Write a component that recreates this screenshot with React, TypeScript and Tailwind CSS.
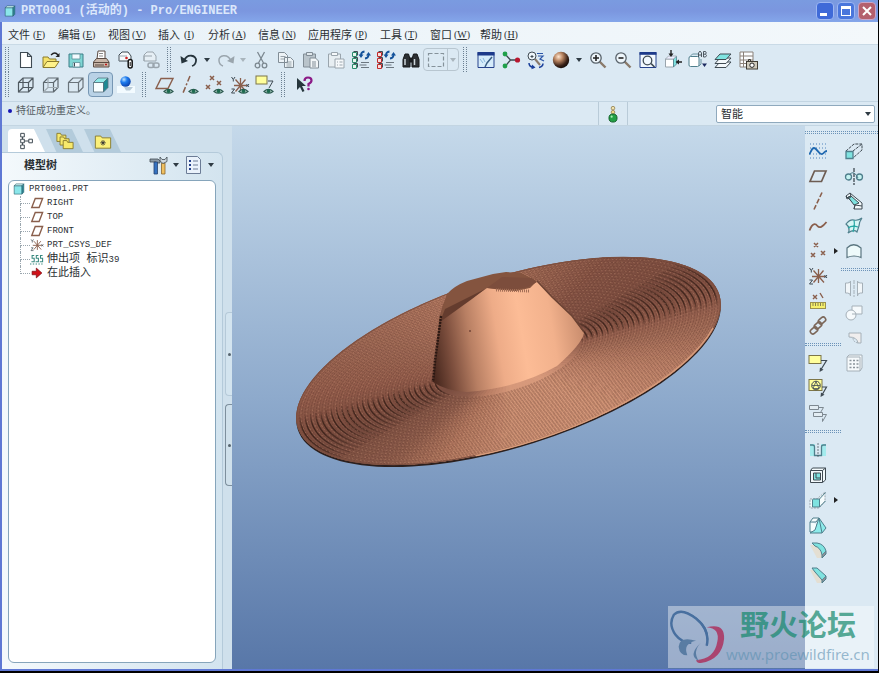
import type { ReactNode } from "react";

const B = "#8a5f4c";
const D = "#3f4a52";
const G = "#9aa5ad";
const C = "#7fe3e0";
const T = "#4f7f8c";

const eye = (
  <g>
    <path d="M9 16.500q4.500-4.500 9 0q-4.500 3.500-9 0z" fill="#dfeee8" stroke="#2c5a50" strokeWidth="1.200" />
    <circle cx="13.500" cy="16.200" r="1.900" fill="#1d6a4f" />
  </g>
);

const cube = (stroke: string, hidden: boolean, hiddenColor = stroke) => (
  <g fill="none" stroke={stroke} strokeWidth="1.200">
    <path d="M2.500 7.500h10v9.500h-10zM2.500 7.500l4.500-4.500h10v9.500l-4.500 4.500M12.500 7.500l4.500-4.500" />
    {hidden && <path d="M7 3v9.500h10M7 12.500l-4.500 4.500" stroke={hiddenColor} />}
  </g>
);

const magnifier = (inner: ReactNode) => (
  <g fill="none">
    <path d="M11.500 11.500l6 6" stroke="#8a7a6a" strokeWidth="2.400" />
    <circle cx="8" cy="8" r="5.200" fill="#eef6fb" stroke="#59636b" strokeWidth="1.300" />
    {inner}
  </g>
);

const csys = (
  <g stroke={B} strokeWidth="1.300" fill="none">
    <path d="M10.500 3v14M4 10.500h13M5.500 4.500l10.500 12M15.500 4.500l-10 12" />
    <path d="M1.500 2l1.800 2.500L5 2M3.300 4.500v2M1.500 14h3l-3 4h3.500M16.500 9l2.500 3M19 9l-2.500 3" stroke={D} strokeWidth="1" />
  </g>
);

const note = (
  <g>
    <rect x="1" y="2.500" width="12" height="8" fill="#ffff9c" stroke="#7d7648" />
    <path d="M13 7.500h5.500l-5.500 9" fill="none" stroke={D} strokeWidth="1.200" />
    <path d="M11.500 19l.500-4.500 3.500 2.200z" fill={D} />
  </g>
);

const model = (dot: string, box: string) => (
  <g>
    <g fill={box} stroke={dot} strokeWidth="1">
      <path d="M1.500 2.500h4v4H1.500zM1.500 8.500h4v4H1.500zM1.500 14.500h4v4H1.500z" />
    </g>
    <path d="M2.500 1.500h4v4M2.500 7.500h4v4M2.500 13.500h4v4" fill="none" stroke={D} strokeWidth="1" />
    <path d="M10 5q0-3 3.500-3.500M17.500 5q0 3-3.500 3.500" fill="none" stroke="#14529a" strokeWidth="1.800" />
    <path d="M7.500 4.500h5L10 8zM15 5.500h5L17.500 2z" fill="#14529a" />
    <path d="M10 12.500h8M8.500 15h7M10 17.500h8" stroke="#6c7780" strokeWidth="1.100" />
  </g>
);

const ICONS: Record<string, ReactNode> = {
  new: <path d="M4.500 2.500h7l4 4v11h-11zM11.500 2.500v4h4" fill="#fff" stroke={D} strokeWidth="1.100" />,
  open: (
    <g>
      <path d="M2 17V7h5l1.500 2H15v3" fill="#f5e26b" stroke="#8a7a2c" />
      <path d="M2 17.500l4-6h12l-4 6z" fill="#fff28a" stroke="#8a7a2c" />
      <path d="M10 5q4-4 7 0" fill="none" stroke="#222" strokeWidth="1.300" />
      <path d="M18.500 3v4h-4z" fill="#222" />
    </g>
  ),
  save: (
    <g>
      <path d="M3 4h14v13H3z" fill="#7fd6d4" stroke="#3d7f88" />
      <path d="M6 4h8v5H6zM7 12.500h7V17H7z" fill="#f4fbff" stroke="#5a8f98" strokeWidth=".800" />
      <path d="M8.500 13v3.500" stroke={D} />
    </g>
  ),
  print: (
    <g stroke="#5b4b42" strokeWidth="1">
      <path d="M6 9l1-8h7v8z" fill="#fff" />
      <path d="M8 3.500h4M8 6h4" stroke="#888" />
      <path d="M2.500 12l3-3.500h10l2.500 3.500v5h-15.500z" fill="#c9b6a8" />
      <path d="M2.500 12.500H18M4 15h9" fill="none" />
      <path d="M14 14.500h2" stroke="#c01818" strokeWidth="1.500" />
    </g>
  ),
  attach: (
    <g fill="none">
      <path d="M3 11V5l3-3h6l3 4v5z" fill="#f6f9fb" stroke={D} />
      <path d="M3 11V6h8" stroke={G} />
      <circle cx="10.500" cy="8" r="1.300" fill="#d02020" />
      <rect x="12.200" y="9.500" width="4" height="8.500" rx="2" fill="#fff" stroke="#111" strokeWidth="1.500" />
      <path d="M14.200 12v4" stroke="#111" />
    </g>
  ),
  link: (
    <g fill="none" stroke={G}>
      <path d="M3 11V5l3-3h6l3 4v5zM3 11V6h8" fill="#e6eff5" />
      <rect x="7" y="13" width="6" height="4.500" rx="2" strokeWidth="1.500" />
      <rect x="12" y="13" width="6" height="4.500" rx="2" strokeWidth="1.500" />
    </g>
  ),
  undo: (
    <g>
      <path d="M5 11C8 3 18 5 17 11q-.500 4-4 5" fill="none" stroke="#26343c" strokeWidth="1.800" />
      <path d="M1.500 6l1 7.500 6.500-2.500z" fill="#26343c" />
    </g>
  ),
  redo: (
    <g>
      <path d="M15 11C12 3 2 5 3 11q.500 4 4 5" fill="none" stroke={G} strokeWidth="1.500" />
      <path d="M18.500 6l-1 7.500-6.500-2.500z" fill={G} />
    </g>
  ),
  cut: (
    <g fill="none" stroke="#7c8890" strokeWidth="1.300">
      <path d="M6.500 2l6 11M13.500 2l-6 11" />
      <circle cx="6.500" cy="15.500" r="2.300" />
      <circle cx="13.500" cy="15.500" r="2.300" />
    </g>
  ),
  copy: (
    <g fill="#edf3f7" stroke="#818d96">
      <path d="M2.500 2.500h6l3 3v7h-9zM8.500 7.500h6l3 3v7h-9z" />
      <path d="M4.500 6.500h5M4.500 9h4M10.500 12h5M10.500 14h5M10.500 16h5" strokeWidth=".800" />
    </g>
  ),
  paste: (
    <g stroke="#818d96">
      <path d="M2.500 4h12v13h-12z" fill="#b9c4cb" />
      <path d="M5.500 5.500v-3h6v3z" fill="#dfe7ec" />
      <path d="M9 8h5.500l3 3v7H9z" fill="#f2f6f8" />
      <path d="M11 12h4M11 14h4M11 16h4" />
    </g>
  ),
  special: (
    <g stroke={G}>
      <path d="M2.500 4h12v13h-12z" fill="#e7eef2" />
      <path d="M5.500 5.500v-3h6v3z" fill="#f6f9fb" />
      <path d="M9 9h9v9H9z" fill="#f6f9fb" />
      <path d="M11 12h1M13.500 12h3M11 15h1M13.500 15h3" />
    </g>
  ),
  regen: model("#2c8c6c", "#e9f6ef"),
  regen2: model("#c22a2a", "#f8dede"),
  find: (
    <g fill="#2c3033" stroke="#16181a">
      <path d="M4 4h3.500l1.500 5v8H2V9.500zM12.500 4H16l2 5.500V17h-7V9zM9 8h2v4H9z" />
      <path d="M4 9v6M13.500 9v6" stroke="#cdd5da" strokeWidth="1.500" />
    </g>
  ),
  select: <path d="M2.500 3.500h15v13h-15z" fill="none" stroke="#85929a" strokeWidth="1.200" strokeDasharray="4 2" />,
  repaint: (
    <g>
      <path d="M2 2.500h16v15H2z" fill="#d6ecfb" stroke="#26428c" />
      <path d="M1.500 2h17v3.500h-17z" fill="#1d3a8a" />
      <path d="M4 9l3 4M7 8l2 4" stroke="#8ab8dc" />
      <path d="M16 7l-5 6-2 4" fill="none" stroke="#3a5f84" strokeWidth="1.500" />
    </g>
  ),
  spin: (
    <g>
      <path d="M4.500 4.500l5 5.500-5 6M9.500 10H17" fill="none" stroke="#3e4a50" strokeWidth="1.300" />
      <circle cx="4" cy="4" r="2.400" fill="#20a04a" />
      <circle cx="4" cy="16" r="2.400" fill="#20a04a" />
      <circle cx="16.500" cy="10" r="2.600" fill="#b81830" />
    </g>
  ),
  orient: (
    <g fill="none">
      <path d="M9 9l5 6" stroke="#8a7a6a" strokeWidth="2" />
      <circle cx="6" cy="6" r="4" fill="#eef6fb" stroke={D} />
      <path d="M4.500 6.500h3M6 5v3" stroke={D} />
      <path d="M11 3.500h6M12 6h5l-3 3 4 2" stroke="#2a55a8" strokeWidth="1.200" />
      <path d="M3 13q0 4 5 4.500M13 17.500q4-1 4-4" stroke="#1a3f9a" strokeWidth="1.500" />
      <path d="M6 14.500l3.500 3-4 1.800z" fill="#1a3f9a" />
    </g>
  ),
  sphere: <circle cx="10" cy="10" r="8.200" fill="url(#ball)" />,
  zoomin: magnifier(<path d="M5 8h6M8 5v6" stroke="#222" strokeWidth="1.600" />),
  zoomout: magnifier(<path d="M5.500 8h5" stroke="#222" strokeWidth="1.600" />),
  refit: (
    <g fill="none">
      <path d="M2 2.500h16v15H2z" fill="#f2f9ff" stroke="#26428c" />
      <path d="M1.500 2h17v2.800h-17z" fill="#1d3a8a" />
      <circle cx="9.500" cy="10.500" r="4.300" stroke={D} strokeWidth="1.300" />
      <path d="M13 13.500l3.500 3.500" stroke={D} strokeWidth="1.700" />
    </g>
  ),
  reorient: (
    <g>
      <path d="M2.500 9h8v8h-8z" fill="#fff" stroke={G} />
      <path d="M10.500 9l3-3v8l-3 3z" fill={C} stroke={T} strokeWidth=".800" />
      <path d="M2.500 9l3-3h8l-3 3z" fill="#eef" stroke={G} strokeWidth=".800" />
      <path d="M8 0v5M19 12h-4" stroke="#222" strokeWidth="1.400" />
      <path d="M5.500 3.500h5L8 7zM16 9.500v5L12.500 12z" fill="#222" />
    </g>
  ),
  views: (
    <g>
      <rect x="1" y="6.500" width="10" height="10" rx="1.500" fill="#fff" stroke={T} />
      <path d="M2 6.500l2.500-2.500h6M11 16l2-2V9" fill="none" stroke={T} strokeWidth=".800" />
      <path d="M10.500 7V3l1.500-2 1.500 2v4M10.500 5h3M15.500 1.500V7h2q2-1.500 0-2.800q1.500-1.200 0-2.700zM15.500 4.200h2" fill="none" stroke={D} strokeWidth=".900" />
      <path d="M14 13.500h5L16.500 17z" fill="#1c2a60" />
    </g>
  ),
  layers: (
    <g stroke={D} strokeWidth="1" strokeLinejoin="round">
      <path d="M2 17.500h11l5-5.500H7z" fill="#f3f8fb" />
      <path d="M2 13.500h11L18 8H7z" fill="#f3f8fb" />
      <path d="M2 9.500h11L18 4H7z" fill={C} />
    </g>
  ),
  viewmgr: (
    <g>
      <path d="M2 2h13v15H2zM5.500 2v15M2 6h13M2 10h13M2 13.500h8" fill="#fbfdff" stroke="#8a8078" />
      <rect x="8.500" y="11.500" width="11" height="7.500" fill="#cfcabc" stroke="#403c34" />
      <circle cx="14" cy="15.200" r="2.200" fill="#fff" stroke="#222" />
      <path d="M10.500 11v-1.500h2V11" fill="none" stroke="#403c34" />
    </g>
  ),
  wire: cube("#4f5960", true),
  hiddenline: cube("#5f6970", true, "#a2adb4"),
  nohidden: cube("#6a747b", false),
  shaded: (
    <g strokeWidth=".800" stroke="#56707c">
      <path d="M2.500 7.500h10v9.500h-10z" fill="#f8feff" />
      <path d="M2.500 7.500l4.500-4.500h10l-4.500 4.500z" fill="#8fe9e8" />
      <path d="M12.500 7.500l4.500-4.500v9.500l-4.500 4.500z" fill="#1d8a94" />
    </g>
  ),
  enhanced: (
    <g>
      <path d="M1 11h18v7H1z" fill="#f3fbff" />
      <path d="M8 12h9l-3 3.500h-4z" fill="#b9cbd8" />
      <circle cx="9.500" cy="6.500" r="5.200" fill="url(#blueball)" />
    </g>
  ),
  planes: (
    <g>
      <path d="M6 3.500h12l-5 10H1z" fill="none" stroke={B} strokeWidth="1.400" />
      {eye}
    </g>
  ),
  axes: (
    <g>
      <path d="M10 1L3 18" stroke={B} strokeWidth="1.500" strokeDasharray="6 2 2 2" />
      {eye}
    </g>
  ),
  points: (
    <g>
      <path d="M5 1l4 4m0-4L5 5M1 10l4 4m0-4l-4 4M12 6l4 4m0-4l-4 4" stroke={B} strokeWidth="1.500" />
      {eye}
    </g>
  ),
  csysshow: (
    <g>
      {csys}
      {eye}
    </g>
  ),
  notes: (
    <g>
      <rect x="1" y="1" width="11" height="8" fill="#ffff9c" stroke="#7d7648" />
      <path d="M13 6h5l-4 7" fill="none" stroke={D} />
      {eye}
    </g>
  ),
  help: (
    <g>
      <path d="M3 3v12l3-3 2.500 5 2-1-2.500-5h4z" fill="#26363c" />
      <path d="M10.500 6q0-3.500 3.500-3.500t3.500 3q0 2-3 3.500v2.500" fill="none" stroke="#8b1a86" strokeWidth="2.200" />
      <circle cx="14.500" cy="14" r="1.300" fill="#8b1a86" />
    </g>
  ),
  sketch: (
    <g fill="none">
      <path d="M2 3h16M2 7h16M2 13h16M2 17h16" stroke="#4f83bd" strokeDasharray="1 2" />
      <path d="M1 13c2 0 2-6 5-6s5 7 8 6 2-3 5-3" stroke="#1f68b0" strokeWidth="1.800" />
    </g>
  ),
  plane: <path d="M6.500 5H18l-4.500 10.500H2z" fill="none" stroke="#6d5c52" strokeWidth="1.700" />,
  treeplane: <path d="M7.500 3.500H18l-5 13H2.500z" fill="none" stroke={B} strokeWidth="2" />,
  axis: <path d="M14 1.500L6 18.500" stroke={B} strokeWidth="1.600" strokeDasharray="5 2" />,
  curve: <path d="M1.500 14.500c3-8 6-7 8-4.500s5 1 9-4" fill="none" stroke={B} strokeWidth="1.800" />,
  point: <path d="M6 2l4 4m0-4L6 6M3 12l4 4m0-4l-4 4M13 10l4 4m0-4l-4 4" stroke={B} strokeWidth="1.500" />,
  csys,
  analysis: (
    <g>
      <path d="M5 4l4 4m0-4L5 8M12 2l3 5" stroke={B} strokeWidth="1.400" />
      <rect x="2.500" y="11.500" width="15" height="6" fill="#f5ef6a" stroke="#9c924c" />
      <path d="M5 12v3M7.500 12v3M10 12v3M12.500 12v3M15 12v3" stroke="#7d7648" strokeWidth=".900" />
    </g>
  ),
  chain: (
    <g fill="none" stroke="#7b6658" strokeWidth="1.600">
      <rect x="10" y="2" width="8" height="5" rx="2.500" transform="rotate(-40 14 4.500)" />
      <rect x="6" y="7" width="8" height="5" rx="2.500" transform="rotate(-40 10 9.500)" />
      <rect x="2" y="12" width="8" height="5" rx="2.500" transform="rotate(-40 6 14.500)" />
    </g>
  ),
  note,
  symbol: (
    <g>
      <rect x="1" y="1.500" width="13" height="11" fill="#ffff9c" stroke="#7d7648" />
      <circle cx="8" cy="7.500" r="4.300" fill="none" stroke={D} />
      <path d="M8 3.500l3 7H5zM4 7.500h8" fill="none" stroke={D} strokeWidth=".800" />
      <path d="M14 9h4.500l-4.500 8" fill="none" stroke={D} strokeWidth="1.200" />
      <path d="M12.500 19l.500-4.500 3.500 2.200z" fill={D} />
    </g>
  ),
  balloon: (
    <g fill="#e3edf3" stroke="#7e8991">
      <path d="M1.500 2.500h9v4h-9zM5.500 9.500h9v4h-9z" />
      <path d="M10.500 4.500h5l-3 5M14.500 11.500h4l-4 7M14.500 18.500v-3" fill="none" />
    </g>
  ),
  hole: (
    <g fill="none">
      <path d="M2 4h5v12H2zM13 4h5v12h-5z" fill="#8debea" stroke="none" opacity=".7" />
      <path d="M2 5h2.500q2 0 2 2v8.500h7V7q0-2 2-2H18" stroke={T} strokeWidth="1.300" />
      <path d="M10 3v14" stroke={D} strokeDasharray="2 1" strokeWidth=".700" />
    </g>
  ),
  shell: (
    <g fill="none" stroke={D}>
      <path d="M2.500 5.500h12v12h-12zM2.500 5.500l2-2.500h13v12l-3 2.500M14.500 5.500l3-2.500" fill="#f3fafc" />
      <path d="M5.500 8h7v7h-7z" fill={C} />
      <path d="M8 8v5h4.500" />
    </g>
  ),
  rib: (
    <g fill="none">
      <path d="M2 9h7l8-7v9l-6 7H2z" fill="#f5fcfd" stroke={G} strokeDasharray="2 1" />
      <path d="M4.500 10q0-1 1-1h6v8h-7z" fill={C} stroke={T} />
      <path d="M11.500 9l6-6.500M11.500 17l6-6" stroke={T} />
    </g>
  ),
  draft: (
    <g stroke={T}>
      <path d="M2 7h6l3-4H5zM2 7v10h7V9" fill="#f5fcfd" />
      <path d="M7 15l4-12 7 10-4 5H2z" fill="#8debea" />
      <path d="M11 3l3 15" fill="none" />
    </g>
  ),
  round: (
    <g>
      <path d="M2 5h7l5 7v6H9z" fill="#e6dccb" opacity=".8" />
      <path d="M4 3h5q7 1 9 8l-4 4q-1-7-7-9z" fill={C} stroke={T} />
      <path d="M14 15v3l4-4v-3" fill="#8a9298" stroke={T} />
    </g>
  ),
  chamfer: (
    <g>
      <path d="M2 5h7l5 7v6H9z" fill="#e6dccb" opacity=".8" />
      <path d="M4 3h5l9 8-4 4-7-8z" fill={C} stroke={T} />
      <path d="M14 15v3l4-4v-3" fill="#8a9298" stroke={T} />
    </g>
  ),
  extrude: (
    <g fill="none" stroke={D}>
      <path d="M2 10l8-7h8v6l-9 8M9 10l9-7" strokeDasharray="3 1" />
      <path d="M2 10.500h7v7H2z" fill={C} stroke={T} strokeWidth="1.300" />
    </g>
  ),
  revolve: (
    <g fill="none">
      <path d="M10 2v17" stroke={D} strokeDasharray="4 1" strokeWidth="1.300" />
      <circle cx="4.500" cy="11" r="3" fill="#c5f3f1" stroke={T} strokeWidth="1.300" />
      <circle cx="15.500" cy="11" r="3" fill="#c5f3f1" stroke={T} strokeWidth="1.300" />
      <path d="M6 8q4-4 8 4" stroke={T} />
    </g>
  ),
  sweep: (
    <g stroke={D}>
      <path d="M2 5l4-3 12 10v6h-8l1-4z" fill="#f3fafc" />
      <path d="M4 6l3-1 8 7-5 2z" fill={C} />
      <path d="M2 5l1 3 4-2-1-4M10 18l1-4 7 1" fill="none" />
    </g>
  ),
  boundary: (
    <g fill="#d6f6f5" stroke={T} strokeWidth="1.200">
      <path d="M2 8q4-5 8-4t8-2q-3 4-3 8l-2 6q-3-3-9 1 3-5-2-9z" />
      <path d="M4 12q4-3 10-1M10 4q1 5-1 12" fill="none" stroke="#26a8a4" />
    </g>
  ),
  style: <path d="M3 16.500V7q6.500-6.500 14 0v9.500q-7-3-14 0z" fill="#eefafb" stroke="#5b7680" strokeWidth="1.200" />,
  mirror: (
    <g fill="#f1f6f9" stroke="#a5b0b8">
      <path d="M10 2v17" strokeDasharray="4 1" />
      <path d="M1.500 5h2q3 0 3-2v15q0-3-3-3h-2zM18.500 5h-2q-3 0-3-2v15q0-3 3-3h2z" />
    </g>
  ),
  merge: (
    <g fill="#f6fafc" stroke="#a5b0b8">
      <path d="M8 3h10v8H8z" />
      <circle cx="7" cy="12" r="5" />
      <path d="M8 11h4" />
    </g>
  ),
  trim: (
    <g fill="#f0eeee" stroke="#a5b0b8">
      <path d="M5 5h12v10h-3q-1-6-9-6z" />
      <path d="M14 15q-5-1-5-5" strokeDasharray="2 1" fill="none" />
    </g>
  ),
  pattern: (
    <g fill="#f6fafc" stroke="#a5b0b8">
      <path d="M3 4l2-2h13v13l-2 3H3z" />
      <path d="M3 4h13v14" fill="none" />
      <path d="M5.500 7.500h9M5.500 11h9M5.500 14.500h9" stroke="#8a949b" strokeWidth="1.500" strokeDasharray="2 1.500" />
    </g>
  ),
  light: (
    <g stroke="#4a5a3c">
      <circle cx="10" cy="3.500" r="2" fill="#f2e3b0" stroke="#9a8a5a" />
      <circle cx="10" cy="8" r="2" fill="#f2d98a" stroke="#9a8a5a" />
      <circle cx="10" cy="14.500" r="4.500" fill="#22a045" stroke="#0c5a22" />
      <circle cx="8.500" cy="13" r="1.200" fill="#a8efb4" stroke="none" />
    </g>
  ),
  tree: (
    <g fill="#fff" stroke={D} strokeWidth="1.100">
      <path d="M5 5v11M5 10h8" />
      <path d="M3 1.500h4v4H3zM3 8h4v4H3zM3 14.500h4v4H3zM12 8h4v4h-4z" />
    </g>
  ),
  folders: (
    <g fill="#f7e96c" stroke="#86782c">
      <path d="M1 1.500h4l1 2h5v7H1z" />
      <path d="M4.500 5.500h4l1 2h5v7h-10z" />
      <path d="M8 9.500h4l1 2h6v7H8z" />
    </g>
  ),
  favorite: (
    <g>
      <path d="M1.500 4.500h6l1.500 2h9.500v11.500h-17z" fill="#fbf07a" stroke="#86782c" />
      <path d="M10 9v6M7 12h6M8 10l4 4M12 10l-4 4" stroke="#333" />
    </g>
  ),
  tools: (
    <g>
      <path d="M1 4h8l2 2v2H8L7 7H1z" fill="#8c9aa6" stroke="#3f4a52" strokeWidth=".800" />
      <path d="M5 7h3.500v12H5z" fill="#3572c0" stroke="#27436e" strokeWidth=".800" />
      <path d="M12.500 8H16v11h-3.500z" fill="#f0c060" stroke="#8a642c" strokeWidth=".800" />
      <path d="M11 2v4l3 2.500 4-2V2l-2 2.500h-3z" fill="#cfd8de" stroke="#3f4a52" strokeWidth=".800" />
    </g>
  ),
  settings: (
    <g>
      <path d="M2.500 1.500h11l3 3v14h-14z" fill="#eaf2fb" stroke="#6c7c96" />
      <path d="M5 6h2M5 10h2M5 14h2" stroke="#26428c" strokeWidth="2" />
      <path d="M9 6h5M9 10h5M9 14h5" stroke="#6c7c96" />
    </g>
  ),
  part: (
    <g stroke="#26606c">
      <path d="M2 4.500h13v14H2z" fill="#8be6ea" />
      <path d="M2 4.500l3-3h13l-3 3z" fill="#d6fbfb" />
      <path d="M15 4.500l3-3v14l-3 3z" fill="#2e8b97" />
    </g>
  ),
  feature: (
    <g fill="none" stroke="#3a8a80" strokeWidth="1.500">
      <path d="M6 5H3v4h3v5H2M12 5H9v4h3v5H8M18 5h-3v4h3v5h-4" />
      <path d="M0 17h20" strokeDasharray="2 2" />
    </g>
  ),
  insert: <path d="M3 7.500h6V3l8 7-8 7v-4.500H3z" fill="#d01018" stroke="#7a0a10" />,
};

function Icon({ name, className = "h-5 w-5" }: { name: string; className?: string }) {
  return (
    <svg viewBox="0 0 20 20" className={`${className} shrink-0`} aria-hidden="true">
      {ICONS[name]}
    </svg>
  );
}

function Tool({ name, label, active = false }: { name: string; label: string; active?: boolean }) {
  return (
    <button
      aria-label={label}
      className={
        active
          ? "flex h-[25px] w-[25px] shrink-0 items-center justify-center rounded-sm border border-[#7797b4] bg-[#b9d2e6]"
          : "flex h-[25px] w-[25px] shrink-0 items-center justify-center"
      }
    >
      <Icon name={name} />
    </button>
  );
}

function Caret({ muted = false, className = "w-3" }: { muted?: boolean; className?: string }) {
  return (
    <button aria-label="更多" className={`flex h-[25px] shrink-0 items-center justify-center ${className}`}>
      <svg viewBox="0 0 6 4" className="h-1 w-1.5" aria-hidden="true">
        <path d="M0 0h6L3 4z" fill={muted ? "#a9b5bd" : "#2f3b44"} />
      </svg>
    </button>
  );
}

function Grip() {
  return (
    <div className="flex h-[25px] w-1 shrink-0 justify-between">
      <div className="border-l border-dotted border-[#6c8092]" />
      <div className="border-l border-dotted border-[#6c8092]" />
    </div>
  );
}

function HGrip() {
  return (
    <div className="flex h-3 flex-col justify-center gap-px">
      <div className="border-t border-dotted border-[#6c93b8]" />
      <div className="border-t border-dotted border-[#6c93b8]" />
    </div>
  );
}

const MENUS: [string, string][] = [
  ["文件", "F"], ["编辑", "E"], ["视图", "V"], ["插入", "I"], ["分析", "A"],
  ["信息", "N"], ["应用程序", "P"], ["工具", "T"], ["窗口", "W"], ["帮助", "H"],
];

function ToolList({ items }: { items: [string, string][] }) {
  return (
    <>
      {items.map(([n, l]) => (
        <Tool key={n} name={n} label={l} />
      ))}
    </>
  );
}

const TREE: { icon: string; latin?: string; cjk?: string; num?: string }[] = [
  { icon: "treeplane", latin: "RIGHT" },
  { icon: "treeplane", latin: "TOP" },
  { icon: "treeplane", latin: "FRONT" },
  { icon: "csys", latin: "PRT_CSYS_DEF" },
  { icon: "feature", cjk: "伸出项 标识", num: "39" },
  { icon: "insert", cjk: "在此插入" },
];

// Brim shading by angle (degrees, clockwise from the long axis of the ellipse).
const STOPS: [number, number[]][] = [
  [0, [138, 87, 71]],
  [20, [160, 106, 86]],
  [45, [194, 134, 108]],
  [70, [216, 154, 124]],
  [95, [214, 152, 122]],
  [115, [184, 124, 99]],
  [132, [142, 93, 76]],
  [160, [120, 76, 63]],
  [180, [130, 81, 66]],
  [200, [146, 92, 75]],
  [230, [160, 106, 86]],
  [262, [186, 126, 102]],
  [285, [158, 103, 83]],
  [305, [134, 84, 69]],
  [340, [122, 76, 63]],
  [360, [138, 87, 71]],
];

function shade(deg: number) {
  const i = STOPS.findIndex(([a]) => a > deg);
  const [a0, c0] = STOPS[i - 1];
  const [a1, c1] = STOPS[i];
  const t = (deg - a0) / (a1 - a0);
  return `rgb(${c0.map((v, k) => Math.round(v + (c1[k] - v) * t)).join(",")})`;
}

const SECTORS = Array.from({ length: 120 }, (_, i) => {
  const p = (d: number) => `${221 * Math.cos((d * Math.PI) / 180)} ${84 * Math.sin((d * Math.PI) / 180)}`;
  return { d: `M0 0L${p(i * 3)}L${p(i * 3 + 3.6)}z`, fill: shade(i * 3 + 1.5) };
});

// Arcs of the dark groove bands at both ends of the brim, strongest mid-band.
const GROOVES = [8, 14, 20, 26].flatMap((half) =>
  Array.from({ length: 27 }, (_, i) => {
    const rx = 217 - i * 5.4;
    const ry = 82.500 - i * 2.050;
    const a = ((176 - half) * Math.PI) / 180;
    const b = ((176 + half * 0.4) * Math.PI) / 180;
    const p = (t: number, s: number) => `${s * rx * Math.cos(t)} ${s * ry * Math.sin(t)}`;
    return `M${p(a, 1)}A${rx} ${ry} 0 0 1 ${p(b, 1)}M${p(a, -1)}A${rx} ${ry} 0 0 1 ${p(b, -1)}`;
  }),
);

function Hat() {
  return (
    <svg viewBox="0 0 573 543" className="h-full w-full" role="img" aria-label="PRT0001">
      <defs>
        <linearGradient id="crown" gradientUnits="userSpaceOnUse" x1="200" y1="230" x2="352" y2="205">
          <stop offset="0" stopColor="#49291f" />
          <stop offset=".12" stopColor="#7c4e3d" />
          <stop offset=".26" stopColor="#b87f63" />
          <stop offset=".44" stopColor="#eeac88" />
          <stop offset=".6" stopColor="#fcbc96" />
          <stop offset=".8" stopColor="#f2b18c" />
          <stop offset="1" stopColor="#c88c6d" />
        </linearGradient>
      </defs>
      <g transform="translate(276.5 237) rotate(-17.500)">
        <ellipse rx="221" ry="84" fill="#2c201e" />
      </g>
      <g transform="translate(276.500 235) rotate(-17.500)">
        <ellipse rx="221" ry="84" fill="#8a5947" />
        {SECTORS.map((s) => (
          <path key={s.d} d={s.d} fill={s.fill} />
        ))}
        <g fill="none" stroke="#5a3327" strokeWidth="1" strokeDasharray="2 1">
          {Array.from({ length: 48 }, (_, i) => (
            <ellipse key={i} rx={218 - i * 3} ry={83 - i * 1.14} opacity=".35" />
          ))}
        </g>
        <g fill="none" stroke="#21110d" strokeWidth="1.200">
          {GROOVES.map((d, i) => (
            <path key={i} d={d} opacity=".22" />
          ))}
        </g>
        <g fill="none" stroke="#eab090" strokeWidth=".700" strokeDasharray="1.500 2.500">
          {Array.from({ length: 24 }, (_, i) => (
            <ellipse key={i} rx={216 - i * 6} ry={82 - i * 2.300} opacity=".35" />
          ))}
        </g>
        <ellipse rx="220.500" ry="83.500" fill="none" stroke="#7a4e3f" />
        <path d="M-60 80.500A221 84 0 0 0 205 30" fill="none" stroke="#d89c7b" strokeWidth="1.500" />
      </g>
      <path
        d="M208 190L211 179L215 172L235 162L261 149L274 147L290 147L305 155L320 171L340 190L352 207Q350 218 325 240Q286 262 235 266Q214 265 201 256L203 235z"
        fill="url(#crown)"
      />
      <path
        d="M207 195L211 179L215 168Q222 160 235 155L261 148L274 146L290 147L305 155L298 162L284 165L270 164L255 162L242 171L226 180L212 193z"
        fill="#84543f"
      />
      <path d="M213 183L253 163L240 173L208 196z" fill="#643c2e" />
      <path d="M255 162L270 151L300 152L305 156L296 161L280 164z" fill="#7c4d3c" />
      <path d="M305 155L320 171L340 190L352 206" fill="none" stroke="#6a4233" strokeWidth="1.500" />
      <path d="M209 190L203 235L201 256" fill="none" stroke="#2b1813" strokeWidth="2.500" strokeDasharray="2 1" />
      <path d="M264 164l34 1" stroke="#a36e56" strokeWidth="3" strokeDasharray="1 1" />
      <circle cx="238" cy="205" r="1" fill="#754638" />
    </svg>
  );
}

function TreeTab({ icon, label, active = false }: { icon: string; label: string; active?: boolean }) {
  return (
    <button
      role="tab"
      aria-selected={active}
      aria-label={label}
      className={
        active
          ? "flex h-[23px] w-[37px] items-center justify-center rounded-tl bg-white [clip-path:polygon(0_0,70%_0,100%_100%,0_100%)]"
          : "flex h-[23px] w-[37px] items-center justify-center bg-[#b3cbdb] [clip-path:polygon(0_0,70%_0,100%_100%,28%_100%)]"
      }
    >
      <Icon name={icon} className="h-[18px] w-[18px]" />
    </button>
  );
}

function Splitter({ strong = false }: { strong?: boolean }) {
  return (
    <button
      aria-label="折叠面板"
      className={
        strong
          ? "flex h-[82px] w-[7px] items-center justify-center rounded-l border border-r-0 border-[#7d8f9d] bg-[#cfe0eb]"
          : "flex h-[84px] w-[7px] items-center justify-center rounded-l border border-r-0 border-[#b5c9d8] bg-[#d3e4ef]"
      }
    >
      <span className="h-[3px] w-[3px] rounded-full bg-[#56646e]" />
    </button>
  );
}

export default function App() {
  return (
    <div className="flex h-screen flex-col overflow-hidden border-r border-b-2 border-black bg-[#dbe9f3] font-['Liberation_Sans','Noto_Sans_CJK_SC',sans-serif] text-[#2a2f33]">
      <header className="flex h-[22px] shrink-0 items-center bg-linear-to-b from-[#7a9be0] via-[#7b96df] to-[#84a6ea] pr-0.5 pl-1">
        <Icon name="part" className="h-3 w-3" />
        <h1 className="ml-[5px] flex-1 font-['Liberation_Mono','Noto_Sans_CJK_SC',monospace] text-xs leading-5 font-bold whitespace-pre text-[#dbe7fb]">
          PRT0001 (活动的) - Pro/ENGINEER
        </h1>
        <svg className="h-0 w-0" aria-hidden="true">
          <defs>
            <radialGradient id="ball" cx=".35" cy=".3" r=".75">
              <stop offset="0" stopColor="#ffe6d0" />
              <stop offset=".35" stopColor="#b98562" />
              <stop offset=".75" stopColor="#3a2218" />
              <stop offset="1" stopColor="#120a06" />
            </radialGradient>
            <radialGradient id="blueball" cx=".35" cy=".3" r=".75">
              <stop offset="0" stopColor="#bfe4ff" />
              <stop offset=".4" stopColor="#1f7df0" />
              <stop offset="1" stopColor="#0a3ea8" />
            </radialGradient>
          </defs>
        </svg>
        <div className="flex gap-[3px]">
          <button aria-label="最小化" className="flex h-[18px] w-[18px] items-end rounded-sm border border-[#9db7f2] bg-[#3f6ad8] p-[3px]">
            <span className="h-[3px] w-[7px] bg-white" />
          </button>
          <button aria-label="最大化" className="flex h-[18px] w-[18px] items-center justify-center rounded-sm border border-[#9db7f2] bg-[#4a76dc]">
            <span className="h-2.5 w-2.5 border border-t-[3px] border-white" />
          </button>
          <button aria-label="关闭" className="flex h-[18px] w-[18px] items-center justify-center rounded-sm border border-[#c9a5c8] bg-[#b4606e]">
            <svg viewBox="0 0 10 10" className="h-2.5 w-2.5" aria-hidden="true">
              <path d="M1 1l8 8M9 1L1 9" stroke="#fff" strokeWidth="2" />
            </svg>
          </button>
        </div>
      </header>

      <div className="flex min-h-0 flex-1 flex-col border-b-2 border-l-2 border-[#5f78d4]">
        <nav className="flex h-[23px] shrink-0 items-center gap-3 border-b border-[#c9dae6] bg-linear-to-r from-[#e9f2f8] to-[#f3f8fb] pt-1 pl-1.5">
          {MENUS.map(([t, k]) => (
            <button key={k} className="flex shrink-0 items-center gap-0.5 text-[11px] leading-4">
              <span>{t}</span>
              <span className="w-3.5 font-['Liberation_Serif',serif] text-[10px] leading-4">
                (<u>{k}</u>)
              </span>
            </button>
          ))}
        </nav>

        <div className="flex h-[57px] shrink-0 flex-col border-b border-[#c3d5e2] pt-0.5 pl-[3px]">
          <div className="flex h-[25px] items-center">
            <Grip />
            <div className="ml-1 flex">
              <ToolList items={[["new", "新建"], ["open", "打开"], ["save", "保存"], ["print", "打印"], ["attach", "发送"], ["link", "链接"]]} />
            </div>
            <div className="mx-1 flex"><Grip /></div>
            <div className="ml-px flex">
              <Tool name="undo" label="撤消" />
              <Caret />
              <Tool name="redo" label="重做" />
              <Caret muted className="w-2.5" />
              <ToolList items={[["cut", "剪切"], ["copy", "复制"], ["paste", "粘贴"], ["special", "选择性粘贴"], ["regen", "再生"], ["regen2", "再生管理器"], ["find", "查找"]]} />
              <div className="flex h-[23px] w-9 items-center self-center rounded-sm border border-[#b8c6d0]">
                <button aria-label="选取框" className="flex h-full flex-1 items-center justify-center border-r border-[#b8c6d0]">
                  <Icon name="select" />
                </button>
                <Caret muted className="w-2.5" />
              </div>
            </div>
            <div className="mr-1.5 ml-1 flex"><Grip /></div>
            <ToolList items={[["repaint", "重画"], ["spin", "旋转中心"], ["orient", "定向模式"], ["sphere", "外观库"]]} />
            <Caret className="w-3" />
            <ToolList items={[["zoomin", "放大"], ["zoomout", "缩小"], ["refit", "重新调整"], ["reorient", "重定向"], ["views", "已命名视图"], ["layers", "层"], ["viewmgr", "视图管理器"]]} />
          </div>
          <div className="flex h-[25px] items-center">
            <Grip />
            <div className="ml-1 flex">
              <ToolList items={[["wire", "线框"], ["hiddenline", "隐藏线"], ["nohidden", "消隐"]]} />
              <Tool name="shaded" label="着色" active />
              <Tool name="enhanced" label="增强的真实感" />
            </div>
            <div className="mr-1.5 ml-1 flex"><Grip /></div>
            <ToolList items={[["planes", "平面显示"], ["axes", "轴显示"], ["points", "点显示"], ["csysshow", "坐标系显示"], ["notes", "注释显示"]]} />
            <div className="mr-1.5 ml-1 flex"><Grip /></div>
            <Tool name="help" label="帮助" />
          </div>
        </div>

        <div className="flex h-6 shrink-0 items-center border-b border-[#c3d5e2] pr-[3px] pl-1.5">
          <div className="flex flex-1 items-center gap-1 self-start">
            <span className="h-1 w-1 rounded-full bg-[#1414b4]" />
            <p className="text-[10px] leading-[18px] text-[#555d63]">特征成功重定义。</p>
          </div>
          <div className="flex h-full w-[30px] items-center justify-center border-x border-[#b9cbd8]">
            <Icon name="light" className="h-[18px] w-[18px]" />
          </div>
          <div className="ml-[88px] grid w-[159px] items-center">
            <select
              aria-label="过滤器"
              className="col-start-1 row-start-1 h-[18px] appearance-none rounded-xs border border-[#8fa9bd] bg-white pl-1 text-[11px] leading-4"
            >
              <option>智能</option>
            </select>
            <svg viewBox="0 0 6 4" className="pointer-events-none col-start-1 row-start-1 mr-1 h-1 w-1.5 justify-self-end" aria-hidden="true">
              <path d="M0 0h6L3 4z" fill="#2f3b44" />
            </svg>
          </div>
        </div>

        <main className="flex min-h-0 flex-1">
          <aside className="flex w-[230px] shrink-0 bg-[#cfe0ec]">
            <div className="flex min-w-0 flex-1 flex-col pt-[3px]">
              <div role="tablist" className="flex gap-px pl-1.5">
                <TreeTab icon="tree" label="模型树" active />
                <TreeTab icon="folders" label="文件夹浏览器" />
                <TreeTab icon="favorite" label="收藏夹" />
              </div>
              <section className="flex min-h-0 flex-1 flex-col rounded-tr-md border-t border-r border-[#b4cada] bg-linear-to-r from-[#f4f9fc] to-[#d3e4ef] pr-1.5 pb-1.5 pl-1.5">
                <div className="flex h-[27px] shrink-0 items-center pb-1">
                  <h2 className="ml-4 flex-1 text-[11px] leading-4 font-bold">模型树</h2>
                  <Tool name="tools" label="设置" />
                  <Caret className="w-2.5" />
                  <Tool name="settings" label="显示" />
                  <Caret className="w-2.5" />
                </div>
                <div className="min-h-0 flex-1 rounded-md border border-[#86a5bb] bg-white pt-px">
                  <div className="flex h-3.5 items-center gap-1 pl-1 font-['Liberation_Mono',monospace] text-[9px] leading-3">
                    <Icon name="part" className="h-3 w-3" />
                    PRT0001.PRT
                  </div>
                  <ul className="pl-[11px]">
                    {TREE.map((n, i) => (
                      <li key={i} className="flex h-3.5 items-center">
                        <span className="flex h-full w-2.5 shrink-0 flex-col">
                          <span className="flex-1 border-b border-l border-dotted border-[#9aa6ae]" />
                          <span className={i < TREE.length - 1 ? "flex-1 border-l border-dotted border-[#9aa6ae]" : "flex-1"} />
                        </span>
                        <Icon name={n.icon} className="h-3.5 w-3.5" />
                        <span className="ml-[3px] font-['Liberation_Mono','Noto_Sans_CJK_SC',monospace] text-[9px] leading-3">
                          {n.latin}
                          {n.cjk && <span className="text-[11px]">{n.cjk}</span>}
                          {n.num}
                        </span>
                      </li>
                    ))}
                  </ul>
                </div>
              </section>
            </div>
            <div className="flex w-[9px] flex-col items-end gap-2 pt-[186px]">
              <Splitter />
              <Splitter strong />
            </div>
          </aside>

          <div className="min-w-0 flex-1 bg-linear-to-b from-[#c5d9ea] via-[#8eaacc] to-[#5877a8]">
            <Hat />
          </div>

          <aside className="flex w-[73px] shrink-0 flex-col">
            <HGrip />
            <div className="flex">
              <div className="w-9">
                <ToolList items={[["sketch", "草绘"], ["plane", "平面"], ["axis", "轴"], ["curve", "曲线"]]} />
                <div className="flex">
                  <Tool name="point" label="点" />
                  <button aria-label="更多点工具" className="flex w-2 items-center justify-end">
                    <svg viewBox="0 0 4 6" className="h-1.5 w-1" aria-hidden="true"><path d="M0 0v6l4-3z" fill="#222" /></svg>
                  </button>
                </div>
                <ToolList items={[["csys", "坐标系"], ["analysis", "分析"], ["chain", "参照"]]} />
                <HGrip />
                <ToolList items={[["note", "注释"], ["symbol", "符号"], ["balloon", "传播"]]} />
                <HGrip />
                <ToolList items={[["hole", "孔"], ["shell", "壳"]]} />
                <div className="flex">
                  <Tool name="rib" label="筋" />
                  <button aria-label="更多筋工具" className="flex w-2 items-center justify-end">
                    <svg viewBox="0 0 4 6" className="h-1.5 w-1" aria-hidden="true"><path d="M0 0v6l4-3z" fill="#222" /></svg>
                  </button>
                </div>
                <ToolList items={[["draft", "拔模"], ["round", "倒圆角"], ["chamfer", "倒角"]]} />
              </div>
              <div className="flex-1">
                <ToolList items={[["extrude", "拉伸"], ["revolve", "旋转"], ["sweep", "可变截面扫描"], ["boundary", "边界混合"], ["style", "造型"]]} />
                <HGrip />
                <ToolList items={[["mirror", "镜像"], ["merge", "合并"], ["trim", "修剪"], ["pattern", "阵列"]]} />
              </div>
            </div>
          </aside>
        </main>
      </div>

      <div className="absolute right-[5px] bottom-[5px] flex h-[62px] w-[206px] items-center bg-white/40">
        <svg viewBox="0 0 60 62" className="h-full w-[58px] shrink-0 opacity-70" aria-hidden="true">
          <path d="M40 40Q44 24 29 12Q14 0 6 8Q0 18 8 29Q14 37 24 37" fill="none" stroke="#24548c" strokeWidth="2.500" />
          <path d="M40 41Q46 24 30 11Q18 2 9 5Q26 6 34 18Q41 28 40 41z" fill="#24548c" />
          <path d="M40 21Q59 16 58 33Q56 54 34 58Q30 58 29 55Q48 54 51 36Q54 22 40 21z" fill="#b01848" />
          <path d="M29 35Q12 30 11 41Q12 50 20 50Q15 38 29 35zM34 37Q25 46 32 56Q20 50 34 37z" fill="#3d6792" />
        </svg>
        <div className="flex flex-col items-center">
          <span className="text-[29px] leading-[34px] font-bold text-[#12876a]/70">野火论坛</span>
          <span className="font-['Noto_Sans',sans-serif] text-[15px] leading-[22px] text-[#5a8fb0]/60">www.proewildfire.cn</span>
        </div>
      </div>
    </div>
  );
}
